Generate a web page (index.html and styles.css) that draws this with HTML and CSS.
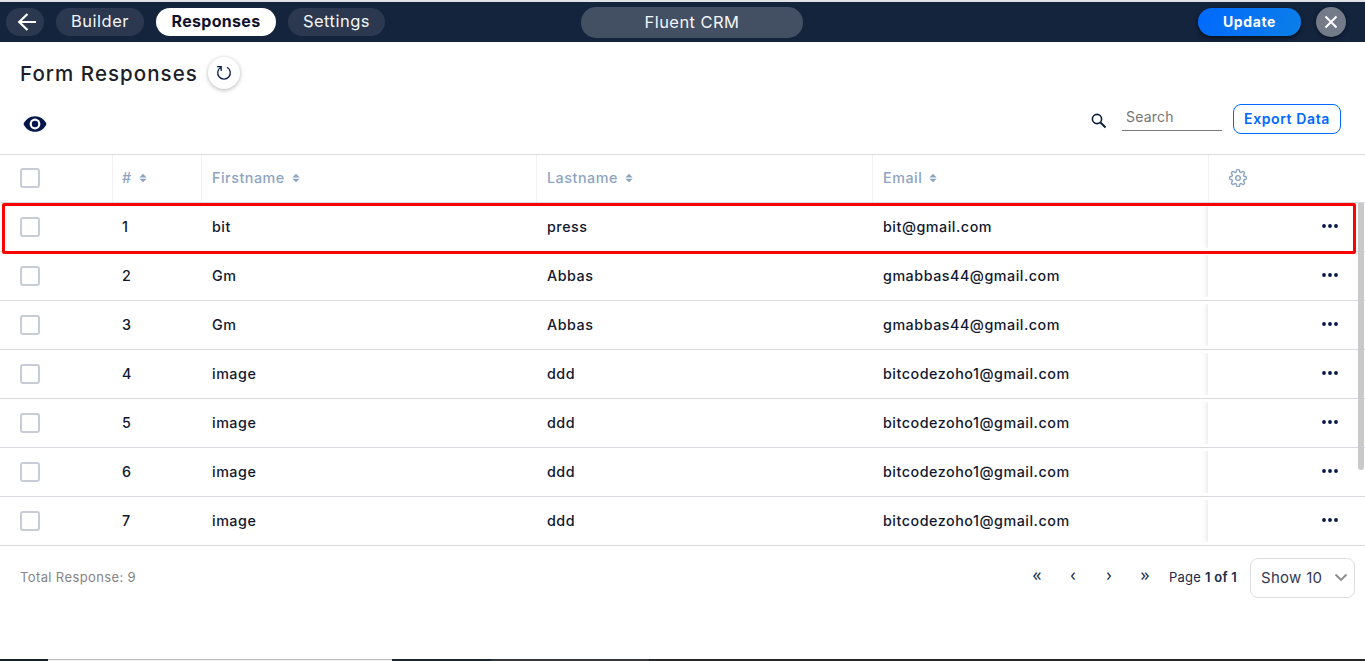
FILE: index.html
```html
<!DOCTYPE html>
<html lang="en">
<head>
<meta charset="utf-8">
<title>Form Responses</title>
<link rel="stylesheet" href="styles.css">
</head>
<body>
<svg class="defs" width="0" height="0">
  <symbol id="sort" viewBox="0 0 8 10"><path d="M4 .7 7.600 4.500H.4zM4 9.300.4 5.700h7.200z" fill="#8da4c2"/></symbol>
  <symbol id="dots" viewBox="0 0 16 4"><circle cx="2" cy="2" r="1.900"/><circle cx="8" cy="2" r="1.900"/><circle cx="14" cy="2" r="1.900"/></symbol>
</svg>
<header class="topbar">
  <nav class="nav">
    <button class="pill back" aria-label="Back"><svg width="20" height="18" viewBox="0 0 20 18"><path d="M10.500 1 2.200 9l8.300 8M2.200 9H19" fill="none" stroke="#fff" stroke-width="2.200"/></svg></button>
    <button class="pill builder">Builder</button>
    <button class="pill responses active">Responses</button>
    <button class="pill settings">Settings</button>
  </nav>
  <div class="form-name">Fluent CRM</div>
  <div class="actions">
    <button class="update">Update</button>
    <button class="close" aria-label="Close"><svg width="14" height="14" viewBox="0 0 14 14"><path d="M1.500 1.500l11 11M12.500 1.500l-11 11" stroke="#fff" stroke-width="2" fill="none"/></svg></button>
  </div>
</header>
<main>
  <div class="title-row">
    <h1>Form Responses</h1>
    <button class="refresh" aria-label="Refresh"><svg width="16" height="16" viewBox="0 0 16 16"><path d="M1 1.600h4.200V6M5 2.200A6.300 6.300 0 1 0 11 2.200" fill="none" stroke="#0b1e4b" stroke-width="1.300"/></svg></button>
  </div>
  <div class="tools">
    <svg class="eye" width="24" height="16" viewBox="0 0 24 16"><path d="M.5 8C2.600 3 7 .2 12 .2S21.400 3 23.500 8C21.400 13 17 15.800 12 15.800S2.600 13 .5 8z" fill="#04164a"/><circle cx="12" cy="8" r="5.400" fill="#fff"/><circle cx="12" cy="8" r="3.200" fill="#04164a"/></svg>
    <div class="tools-right">
      <svg class="glass" width="16" height="16" viewBox="0 0 16 16"><circle cx="6" cy="6" r="4.600" fill="none" stroke="#0b1e3c" stroke-width="1.600"/><path d="M9.500 9.500l5 5" stroke="#0b1e3c" stroke-width="2"/></svg>
      <div class="search">Search</div>
      <button class="export">Export Data</button>
    </div>
  </div>
  <section class="table">
    <div class="row head">
      <div class="cell"><i class="box"></i></div>
      <div class="cell"><span>#</span><svg class="sort"><use href="#sort"/></svg></div>
      <div class="cell"><span>Firstname</span><svg class="sort"><use href="#sort"/></svg></div>
      <div class="cell"><span>Lastname</span><svg class="sort"><use href="#sort"/></svg></div>
      <div class="cell"><span>Email</span><svg class="sort"><use href="#sort"/></svg></div>
      <div class="cell gear"><svg width="18" height="18" viewBox="0.500 0.500 23 23" fill="none" stroke="#8da4c2" stroke-width="1.800"><circle cx="12" cy="12" r="3"/><path d="M19.400 15a1.650 1.650 0 0 0 .33 1.820l.06.06a2 2 0 1 1-2.830 2.830l-.06-.06a1.650 1.650 0 0 0-2.820 1.170V21a2 2 0 0 1-4 0v-.09a1.650 1.650 0 0 0-2.900-1.260l-.06.06a2 2 0 1 1-2.830-2.830l.06-.06A1.650 1.650 0 0 0 3.090 14H3a2 2 0 0 1 0-4h.09a1.650 1.650 0 0 0 1.260-2.820l-.06-.06a2 2 0 1 1 2.830-2.830l.06.06A1.650 1.650 0 0 0 10 3.090V3a2 2 0 0 1 4 0v.09a1.650 1.650 0 0 0 2.820 1.260l.06-.06a2 2 0 1 1 2.830 2.830l-.06.06A1.650 1.650 0 0 0 20.910 10H21a2 2 0 0 1 0 4h-.09a1.650 1.650 0 0 0-1.510 1z"/></svg></div>
    </div>
    <div class="row first"><div class="cell"><i class="box"></i></div><div class="cell"><span>1</span></div><div class="cell"><span>bit</span></div><div class="cell"><span>press</span></div><div class="cell"><span>bit@gmail.com</span></div><div class="cell menu"><svg><use href="#dots"/></svg></div></div>
    <div class="row"><div class="cell"><i class="box"></i></div><div class="cell"><span>2</span></div><div class="cell"><span>Gm</span></div><div class="cell"><span>Abbas</span></div><div class="cell"><span>gmabbas44@gmail.com</span></div><div class="cell menu"><svg><use href="#dots"/></svg></div></div>
    <div class="row"><div class="cell"><i class="box"></i></div><div class="cell"><span>3</span></div><div class="cell"><span>Gm</span></div><div class="cell"><span>Abbas</span></div><div class="cell"><span>gmabbas44@gmail.com</span></div><div class="cell menu"><svg><use href="#dots"/></svg></div></div>
    <div class="row"><div class="cell"><i class="box"></i></div><div class="cell"><span>4</span></div><div class="cell"><span>image</span></div><div class="cell"><span>ddd</span></div><div class="cell"><span>bitcodezoho1@gmail.com</span></div><div class="cell menu"><svg><use href="#dots"/></svg></div></div>
    <div class="row"><div class="cell"><i class="box"></i></div><div class="cell"><span>5</span></div><div class="cell"><span>image</span></div><div class="cell"><span>ddd</span></div><div class="cell"><span>bitcodezoho1@gmail.com</span></div><div class="cell menu"><svg><use href="#dots"/></svg></div></div>
    <div class="row"><div class="cell"><i class="box"></i></div><div class="cell"><span>6</span></div><div class="cell"><span>image</span></div><div class="cell"><span>ddd</span></div><div class="cell"><span>bitcodezoho1@gmail.com</span></div><div class="cell menu"><svg><use href="#dots"/></svg></div></div>
    <div class="row"><div class="cell"><i class="box"></i></div><div class="cell"><span>7</span></div><div class="cell"><span>image</span></div><div class="cell"><span>ddd</span></div><div class="cell"><span>bitcodezoho1@gmail.com</span></div><div class="cell menu"><svg><use href="#dots"/></svg></div></div>
    <div class="scroll-thumb"></div>
    <div class="highlight"></div>
  </section>
  <footer class="footer">
    <div class="total">Total Response: 9</div>
    <div class="pager">
      <button>«</button><button>‹</button><button>›</button><button>»</button>
      <div class="page">Page <b>1 of 1</b></div>
      <div class="show"><span>Show 10</span><svg width="14" height="9" viewBox="0 0 14 9"><path d="M1.500 1.500 7 7l5.500-5.500" fill="none" stroke="#8b8b8b" stroke-width="1.900"/></svg></div>
    </div>
  </footer>
</main>
<div class="taskbar"><i class="dark"></i><i class="light"></i><i class="teal"></i><i class="grey"></i><i class="rest"></i></div>
</body>
</html>
```
FILE: styles.css
```css
* { box-sizing: border-box; }
body { margin: 0; width: 1365px; height: 661px; overflow: hidden; display: flex; flex-direction: column; background: #fff; color: #10182f; font-family: Inter, "Open Sans", sans-serif; font-size: 14px; }
button { border: 0; padding: 0; background: none; font: inherit; color: inherit; display: flex; align-items: center; justify-content: center; }
svg { display: block; flex: none; }
.defs { position: absolute; }
.topbar { height: 42px; flex: none; border-top: 2px solid #dfe3e6; background: #14243d; display: grid; grid-template-columns: 581px 222px 1fr; align-items: center; }
.nav { display: flex; gap: 12px; padding-left: 6px; }
.pill { height: 28px; border-radius: 14px; background: #2b3850; color: #f3f5f8; font-size: 16.500px; padding-bottom: 2px; }
.back { width: 38px; padding: 0 0 0 3px; }
.builder { width: 88px; letter-spacing: .5px; }
.responses { width: 120px; letter-spacing: .3px; }
.settings { width: 97px; letter-spacing: .5px; }
.active { background: #fff; color: #10112f; font-weight: 700; font-size: 16px; }
.form-name { height: 31px; border-radius: 15px; background: #434f63; color: #f3f5f8; font-size: 16.500px; letter-spacing: .45px; display: flex; align-items: center; justify-content: center; }
.actions { display: flex; justify-content: flex-end; align-items: center; gap: 15px; padding-right: 19px; }
.update { width: 103px; height: 28px; border-radius: 14px; color: #fff; font-weight: 700; font-size: 14px; letter-spacing: .6px; padding-bottom: 1px; background: linear-gradient(120deg, #0069ff, #0c7fe6); box-shadow: 0 2px 4px #07101f; }
.close { width: 30px; height: 30px; border-radius: 50%; background: #737b89; box-shadow: 0 1px 4px #07101f; }
main { flex: 1; display: flex; flex-direction: column; }
.title-row { height: 62px; display: flex; align-items: center; padding-left: 20px; }
h1 { margin: 0; width: 188px; font-size: 20.500px; font-weight: 550; color: #1c2028; letter-spacing: 1.050px; white-space: nowrap; }
.refresh { width: 32px; height: 32px; border-radius: 50%; box-shadow: 0 1px 4px rgba(0,0,0,.3); }
.tools { height: 50px; display: flex; justify-content: space-between; padding: 0 24px 0 23px; }
.eye { margin-top: 12px; }
.tools-right { display: flex; }
.glass { margin: 9px 15px 0 0; }
.search { width: 100px; height: 27px; border-bottom: 1px solid #777; padding: 4px 0 0 4px; color: #757575; font-size: 14px; letter-spacing: .2px; }
.export { width: 108px; height: 30px; margin-left: 11px; border: 1px solid #0069ff; border-radius: 8px; color: #0069ff; font-size: 14px; font-weight: 600; letter-spacing: .6px; padding-bottom: 2px; }
.table { position: relative; border-top: 1px solid #dadae2; }
.row { display: grid; grid-template-columns: 112px 89px 335px 336px 336px 1fr; height: 49px; border-bottom: 1px solid #d8d8df; font-weight: 500; font-size: 14.300px; letter-spacing: .53px; }
.head { height: 48px; color: #8da4c2; }
.cell { display: flex; align-items: center; padding-left: 11px; }
.cell:nth-child(2) { padding-left: 10px; }
.cell span { padding-bottom: 2px; }
.cell:first-child { padding-left: 20px; }
.head .cell + .cell { border-left: 1px solid #f1f1f4; padding-left: 10px; }
.head .cell:nth-child(2) { padding-left: 9px; }
.head .cell { padding-bottom: 1px; }
.box { width: 20px; height: 20px; border: 2px solid #c8ccd6; border-radius: 3px; }
.sort { width: 8px; height: 10px; margin-left: 7px; }
.row.head .gear { padding-left: 20px; }
.menu { justify-content: flex-end; padding: 0 27px 2px 0; background: #fff; box-shadow: -2px 0 5px -1px rgba(0,0,0,.11); clip-path: inset(3px 0 3px -6px); }
.menu svg { width: 16px; height: 4px; fill: #04164a; }
.scroll-thumb { position: absolute; right: 1px; top: 48px; width: 6px; height: 267px; border-radius: 0 0 3px 3px; background: #c9c9c9; }
.highlight { position: absolute; left: 2px; top: 48px; width: 1354px; height: 51px; border: 3px solid #f80404; border-radius: 2px; }
.footer { height: 63px; display: flex; align-items: center; justify-content: space-between; padding: 0 10px 0 20px; }
.total { font-size: 13px; color: #858585; letter-spacing: .38px; padding-bottom: 1px; }
.pager { display: flex; align-items: center; color: #18294b; }
.pager button { width: 36px; height: 30px; font-size: 18px; padding-bottom: 8px; font-family: "Open Sans", sans-serif; }
.page { width: 81px; margin-left: 6px; font-size: 13px; letter-spacing: .25px; padding-bottom: 1px; white-space: nowrap; }
.page b { font-weight: 600; }
.show { width: 105px; height: 40px; border: 1px solid #dedede; border-radius: 8px; display: flex; align-items: center; justify-content: space-between; padding: 0 6px 0 10px; font-size: 15px; letter-spacing: .3px; color: #333a52; }
.row.head .gear svg { margin-left: 0; }
.taskbar { height: 2px; flex: none; display: grid; grid-template-columns: 48px 344px 99px 158px 1fr; }
.dark { background: #17222a; }
.light { background: #f3f3f3; border-top: 1px solid #bbb; }
.teal { background: #18272f; }
.grey { background: #35373b; }
.rest { background: #23282c; }
```
